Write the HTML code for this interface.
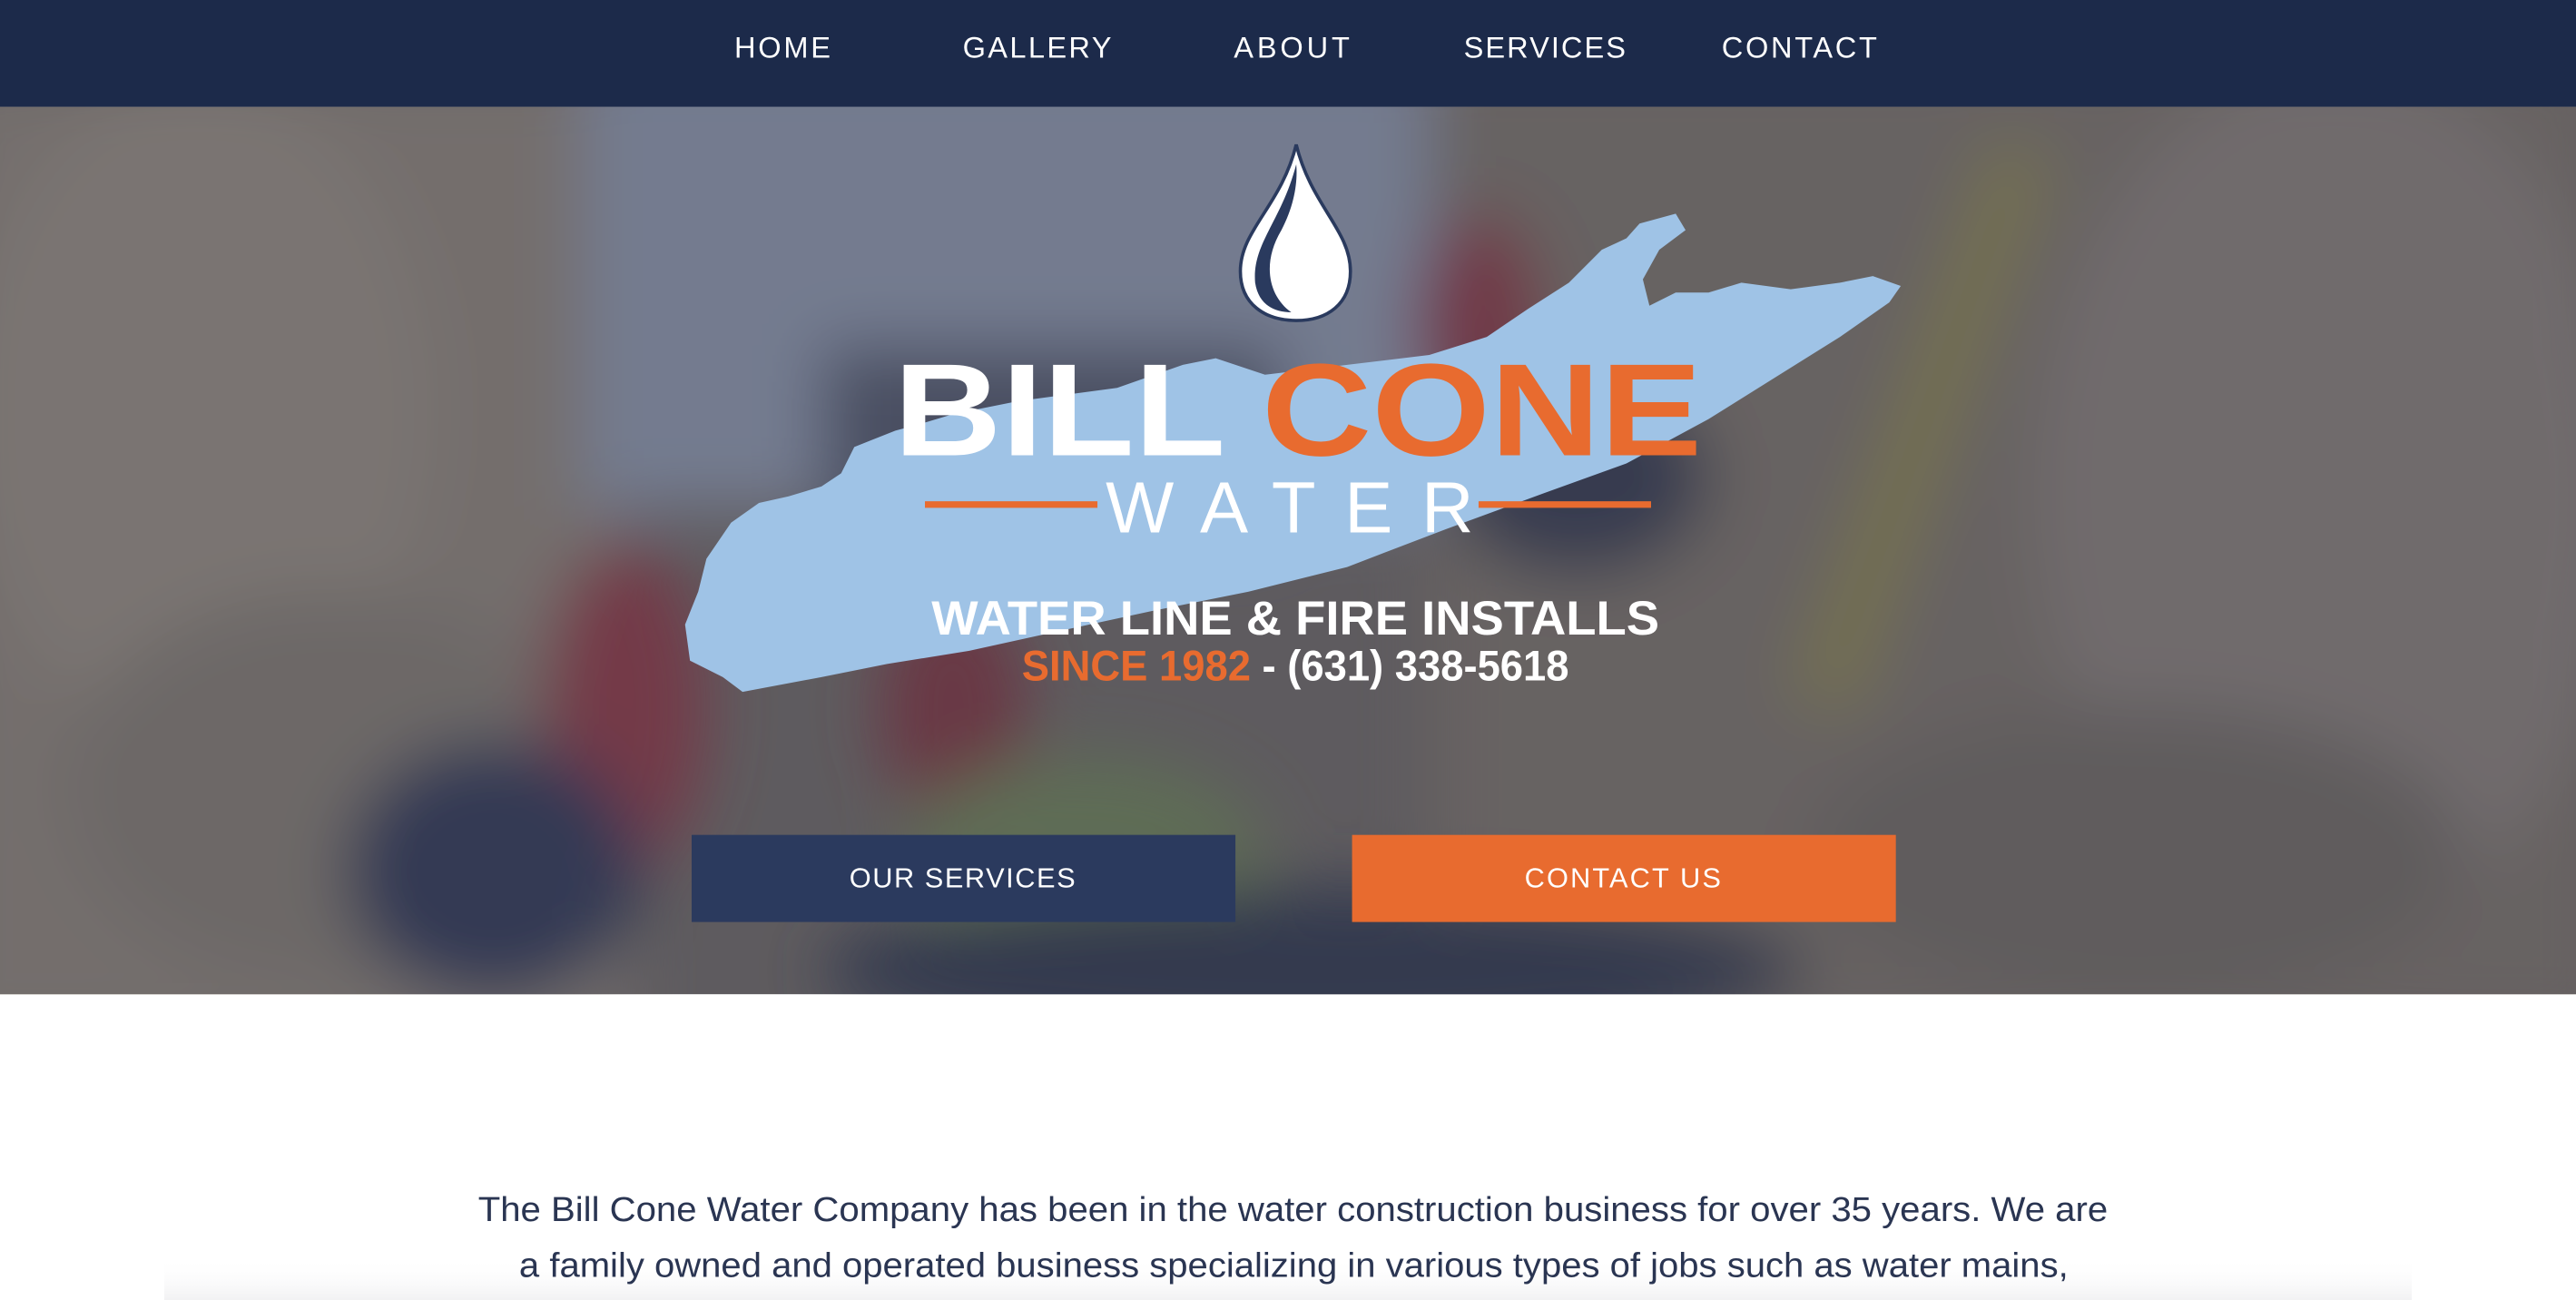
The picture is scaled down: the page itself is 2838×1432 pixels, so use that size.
<!DOCTYPE html>
<html><head><meta charset="utf-8"><style>
html,body{margin:0;padding:0;width:2838px;height:1432px;overflow:hidden;background:#fff}
svg{position:absolute;left:0;top:0;width:2838px;height:1432px;display:block}
</style></head><body>
<svg viewBox="0 0 1568 791" preserveAspectRatio="none" xmlns="http://www.w3.org/2000/svg">
<defs>
<filter id="b" filterUnits="userSpaceOnUse" x="-200" y="0" width="2000" height="800"><feGaussianBlur stdDeviation="20"/></filter>
<clipPath id="hc"><rect x="0" y="65" width="1568" height="540"/></clipPath>
<linearGradient id="fade" x1="0" y1="0" x2="0" y2="1"><stop offset="0" stop-color="#fff" stop-opacity="0"/><stop offset="1" stop-color="#ececee" stop-opacity="0.7"/></linearGradient>
</defs>
<rect width="1568" height="791" fill="#fff"/>
<g clip-path="url(#hc)">
<rect x="0" y="65" width="1568" height="540" fill="#7a7166"/>
<g filter="url(#b)">
<rect x="-40" y="40" width="420" height="600" fill="#9a8d7a"/>
<ellipse cx="120" cy="250" rx="140" ry="200" fill="#a39682"/>
<ellipse cx="200" cy="480" rx="160" ry="120" fill="#8f8472"/>
<rect x="355" y="30" width="520" height="280" fill="#9aa0ad"/>
<rect x="500" y="210" width="280" height="120" fill="#5c5f6a"/>
<rect x="870" y="30" width="720" height="600" fill="#877b6b"/>
<ellipse cx="1420" cy="300" rx="180" ry="260" fill="#94887a"/>
<ellipse cx="1300" cy="520" rx="200" ry="90" fill="#7c7264"/>
<ellipse cx="380" cy="430" rx="50" ry="100" fill="#9a4044"/>
<ellipse cx="580" cy="430" rx="45" ry="70" fill="#8a3c40"/>
<ellipse cx="900" cy="200" rx="40" ry="70" fill="#953f45"/>
<ellipse cx="660" cy="520" rx="110" ry="60" fill="#7a8a58"/>
<ellipse cx="300" cy="530" rx="90" ry="80" fill="#3a4056"/>
<ellipse cx="960" cy="290" rx="80" ry="60" fill="#3f4250"/>
<rect x="1150" y="80" width="40" height="360" fill="#9a9050" transform="rotate(20 1170 260)"/>
<ellipse cx="800" cy="590" rx="300" ry="50" fill="#3b3f4e"/>
</g>
<rect x="0" y="65" width="1568" height="540" fill="#243050" opacity="0.32"/>
</g>
<rect x="0" y="0" width="1568" height="65" fill="#1c2a4a"/>
<g font-family="Liberation Sans, sans-serif" font-size="18" fill="#fff" letter-spacing="1.5">
<text x="447" y="35" textLength="60">HOME</text>
<text x="586" y="35" textLength="92">GALLERY</text>
<text x="751" y="35" textLength="72">ABOUT</text>
<text x="891" y="35" textLength="100">SERVICES</text>
<text x="1048" y="35" textLength="96">CONTACT</text>
</g>
<path fill="#9fc3e6" d="M452,421 L440,412 L420,402 L417,380 L425,360 L430,340 L445,318 L462,306 L480,302 L500,296 L512,288 L520,272 L530,268 L545,262 L560,258 L580,252 L620,244 L680,236 L720,222 L740,218 L770,228 L820,222 L870,216 L905,205 L930,188 L955,172 L975,152 L990,145 L998,136 L1020,130 L1026,140 L1010,152 L1000,170 L1004,186 L1020,178 L1040,178 L1060,172 L1090,176 L1120,172 L1140,168 L1157,174 L1150,184 L1120,205 L1080,230 L1040,255 L990,282 L940,300 L880,322 L820,345 L760,360 L700,372 L640,385 L590,396 L540,404 L500,412 Z"/>
<path d="M789,88 C780,125 755,140 755,165 C755,185 770,195 789,195 C808,195 822,185 822,165 C822,140 798,125 789,88 Z" fill="#fff" stroke="#2a3a5e" stroke-width="2"/>
<path d="M789,100 C780,135 762,148 764,172 C766,185 775,190 786,190 C772,180 768,160 780,140 C788,125 790,110 789,100 Z" fill="#2a3a5e"/>
<g font-family="Liberation Sans, sans-serif" font-weight="bold">
<text x="544" y="277" font-size="80" fill="#fff" textLength="202" lengthAdjust="spacingAndGlyphs">BILL</text>
<text x="768" y="277" font-size="80" fill="#e86b2f" textLength="268" lengthAdjust="spacingAndGlyphs">CONE</text>
<text x="673" y="324" font-size="44" font-weight="normal" fill="#fff" textLength="224" lengthAdjust="spacing">WATER</text>
<text x="567" y="386" font-size="29" fill="#fff" textLength="443" lengthAdjust="spacingAndGlyphs">WATER LINE &amp; FIRE INSTALLS</text>
<text x="622" y="414" font-size="26" textLength="333" lengthAdjust="spacingAndGlyphs"><tspan fill="#e86b2f">SINCE 1982</tspan><tspan fill="#fff"> - (631) 338-5618</tspan></text>
</g>
<rect x="563" y="305" width="105" height="4" fill="#e86b2f"/>
<rect x="900" y="305" width="105" height="4" fill="#e86b2f"/>
<rect x="421" y="508" width="331" height="53" fill="#2b3a5e"/>
<rect x="823" y="508" width="331" height="53" fill="#e86b2f"/>
<g font-family="Liberation Sans, sans-serif" font-size="17" fill="#fff" letter-spacing="0.5">
<text x="517" y="540" textLength="138">OUR SERVICES</text>
<text x="928" y="540" textLength="120">CONTACT US</text>
</g>
<rect x="100" y="765" width="1368" height="26" fill="url(#fade)"/>
<g font-family="Liberation Sans, sans-serif" font-size="21" fill="#2a3552">
<text x="291" y="743" textLength="992" lengthAdjust="spacingAndGlyphs">The Bill Cone Water Company has been in the water construction business for over 35 years. We are</text>
<text x="316" y="777" textLength="943" lengthAdjust="spacingAndGlyphs">a family owned and operated business specializing in various types of jobs such as water mains,</text>
</g>
</svg>
</body></html>
